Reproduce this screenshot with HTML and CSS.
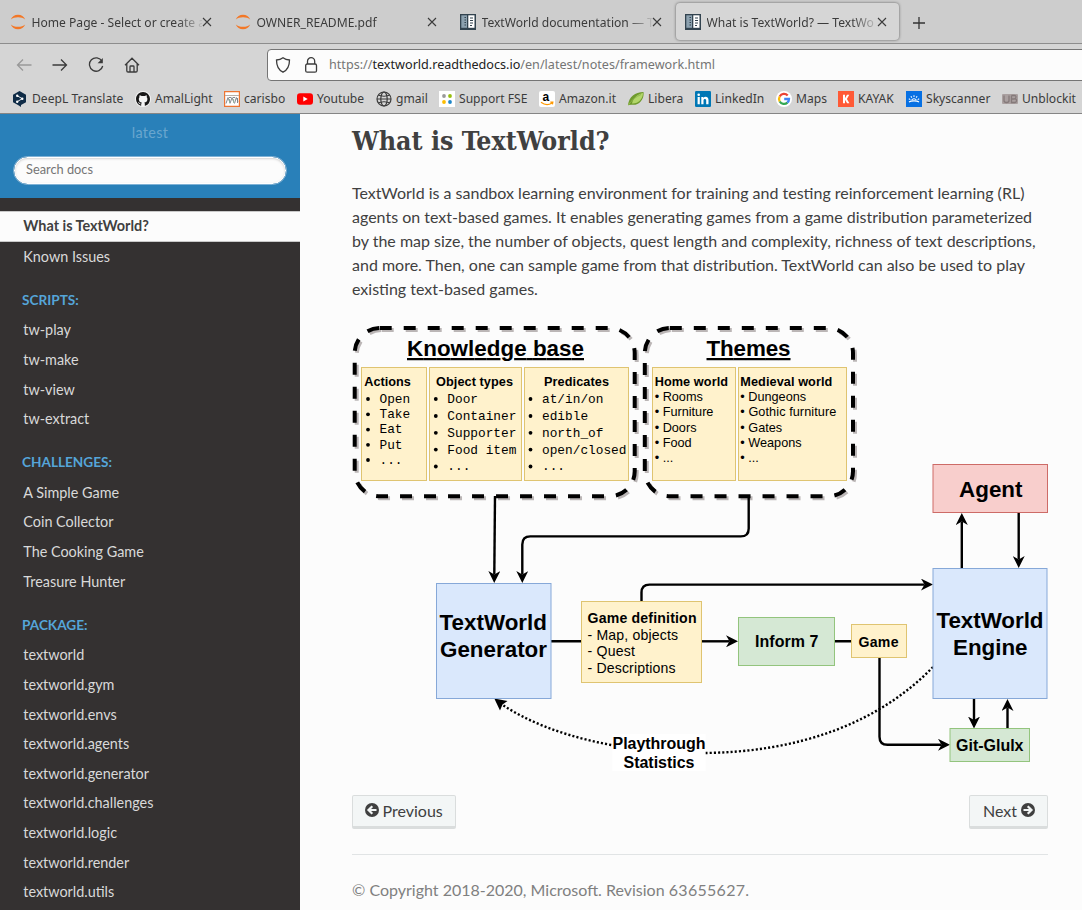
FILE: index.html
```html
<!DOCTYPE html>
<html lang="en">
<head>
<meta charset="utf-8">
<title>What is TextWorld? — TextWorld documentation</title>
<link rel="stylesheet" href="styles.css">
</head>
<body>
<svg class="defs" width="0" height="0">
  <defs>
    <symbol id="close" viewBox="0 0 10 10"><path d="M1 1l8 8M9 1L1 9" fill="none" stroke="#3b3b3b" stroke-width="1.1"/></symbol>
    <symbol id="jupyter" viewBox="0 0 16 16"><path d="M.8 5.6C2 2.6 4.700 .8 8 .8s6 1.800 7.200 4.800C13.500 4 11 3.200 8 3.200S2.500 4 .8 5.600zM.8 10.400C2 13.400 4.700 15.200 8 15.200s6-1.800 7.200-4.800C13.500 12 11 12.800 8 12.800S2.500 12 .8 10.400z" fill="#f37726"/></symbol>
    <symbol id="rtd" viewBox="0 0 16 16"><path d="M0 0h16v16H0z" fill="#32434f"/><path d="M1.300 1.300h5.700v12.500H1.300z" fill="#8ca1af"/><path d="M8.300 1.300h6.200v12.500H8.300z" fill="#fff"/><path d="M10 4h3M10 6.500h3M10 9h3M10 11.500h2M4.500 3.500h1.500M4.500 6h1.500M4.500 8.500h1.500M4.500 11h1.500" stroke="#32434f" stroke-width="1.200"/></symbol>
  </defs>
</svg>
<header class="browser">
  <div class="tabs">
    <div class="tab"><svg class="fav"><use href="#jupyter"/></svg><span class="tab-title">Home Page - Select or create a</span><svg class="x"><use href="#close"/></svg></div>
    <div class="tab"><svg class="fav"><use href="#jupyter"/></svg><span class="tab-title">OWNER_README.pdf</span><svg class="x"><use href="#close"/></svg></div>
    <div class="tab"><svg class="fav"><use href="#rtd"/></svg><span class="tab-title">TextWorld documentation — T</span><svg class="x"><use href="#close"/></svg></div>
    <div class="tab active"><svg class="fav"><use href="#rtd"/></svg><span class="tab-title">What is TextWorld? — TextWo</span><svg class="x"><use href="#close"/></svg></div>
    <svg class="plus" viewBox="0 0 12 12"><path d="M6 0v12M0 6h12" stroke="#333" stroke-width="1.300"/></svg>
  </div>
  <div class="toolbar">
    <div class="nav-buttons">
      <svg viewBox="0 0 16 16" class="dim"><path d="M15.500 8H1.500M7 2.500L1.500 8 7 13.500"/></svg>
      <svg viewBox="0 0 16 16"><path d="M.5 8h14M9 2.500L14.500 8 9 13.500"/></svg>
      <svg viewBox="0 0 16 16"><path d="M14 4.200A6.700 6.700 0 1 0 14.700 9"/><path d="M14.800 1v5.200H9.600z" fill="#3b3b3b" stroke="none"/></svg>
      <svg viewBox="0 0 16 16"><path d="M1 8.300L8 1.200l7 7.100M2.800 7v6.700q0 1.300 1.300 1.300h7.800q1.300 0 1.300-1.300V7M6 15V9.800q0-.8.8-.8h2.400q.8 0 .8.800V15"/></svg>
    </div>
    <div class="urlbar">
      <svg viewBox="0 0 16 16"><path d="M8 .8c2 1.500 4.300 2.100 6.500 2.200 0 5.200-1.200 9.700-6.500 12.200C2.700 12.700 1.500 8.200 1.500 3 3.700 2.900 6 2.300 8 .8z"/></svg>
      <svg viewBox="0 0 16 16"><rect x="2.700" y="7" width="10.800" height="8.200" rx="1.500"/><path d="M4.500 7V4.300a3.600 3.600 0 0 1 7.200 0V7"/></svg>
      <span class="url">https://<b>textworld.readthedocs.io</b>/en/latest/notes/framework.html</span>
    </div>
  </div>
  <nav class="bookmarks">
    <a><svg viewBox="0 0 16 16"><path d="M7.500 0l6.500 3.700v7.500L9 14v2l-3-2-5-2.800V3.700z" fill="#0f2b46"/><path d="M5.200 4.700l5 3-5 3" stroke="#fff" fill="none" stroke-width=".9"/><circle cx="5.200" cy="4.700" r="1.200" fill="#fff"/><circle cx="10.300" cy="7.700" r="1.200" fill="#fff"/><circle cx="5.200" cy="10.700" r="1.200" fill="#fff"/></svg><span>DeepL Translate</span></a>
    <a><svg viewBox="0 0 16 16"><circle cx="8" cy="8" r="8" fill="#f4f4f4"/><path d="M8 1C4.100 1 1 4.200 1 8.100c0 3.200 2 5.800 4.800 6.700.3 0 .4-.2.4-.4v-1.300c-2 .4-2.400-.9-2.400-.9-.4-.9-.9-1.200-.9-1.200 1-.3 1.600.9 1.600.9.800 1.200 1.800.9 2 .7l.4-.9c-1.700-.3-3.100-1-3.100-3.600 0-.8.300-1.400.7-1.900-.1-.3-.3-1 .1-1.900.8 0 1.400.4 2 .8a7 7 0 0 1 3 0c1-.6 2-.8 2-.8.4.9.2 1.600.1 1.900.5.500.7 1.100.7 1.900 0 2.700-1.500 3.300-3.100 3.500.3.300.5.700.5 1.300v1.500c0 .2.100.4.500.4A7 7 0 0 0 15 8.100C15 4.200 11.900 1 8 1z" fill="#181717"/></svg><span>AmalLight</span></a>
    <a><svg viewBox="0 0 16 16"><path d="M.6.6h14.800v14.800H.6z" fill="#fff" stroke="#ed7532" stroke-width="1.200"/><path d="M1 4.500h14" stroke="#b9b0a8"/><path d="M2 12.500L4 6.500l1.500 4M5 6.500h2M6 12.500L8 6.500l1.500 4M9 6.500h2M10.500 12.500l1.800-6 1.700 4M13.500 7v5" fill="none" stroke="#767c83" stroke-width=".9"/><path d="M5.500 8v4M9.600 8v4" stroke="#7fa58b" stroke-width=".8"/></svg><span>carisbo</span></a>
    <a><svg viewBox="0 0 16 16"><rect y="2.300" width="16" height="11.400" rx="3" fill="red"/><path d="M6.300 5.500v5l4.400-2.500z" fill="#fff"/></svg><span>Youtube</span></a>
    <a><svg viewBox="0 0 16 16"><g fill="none" stroke="#3b3b3b" stroke-width="1.200"><circle cx="8" cy="8" r="7"/><ellipse cx="8" cy="8" rx="3.200" ry="7"/><path d="M1 8h14M2.500 4.300q5.500 2 11 0M2.500 11.700q5.500-2 11 0" stroke-width="1"/></g></svg><span>gmail</span></a>
    <a><svg viewBox="0 0 16 16"><path d="M0 0h16v16H0z" fill="#fff"/><circle cx="5" cy="5" r="1.900" fill="#999"/><circle cx="11" cy="5" r="1.900" fill="#97bf0d"/><circle cx="5" cy="11" r="1.900" fill="#fdbd00"/><circle cx="11" cy="11" r="1.900" fill="#1e86c8"/></svg><span>Support FSE</span></a>
    <a><svg viewBox="0 0 16 16"><rect width="16" height="16" rx="2" fill="#fff"/><text x="3.600" y="9.800" class="amazon">a</text><path d="M2 11.300c3.500 2.700 8 2.700 11 .7M11.300 11.200l2.500-.1-.4 2.200" fill="none" stroke="#f90" stroke-width="1.300"/></svg><span>Amazon.it</span></a>
    <a><svg viewBox="0 0 16 16"><path d="M0 14C1 6 7 1 15.500 1 16.500 8 11 15 3.500 13.700z" fill="#6f9a2d"/><path d="M4 12.500C5 7 10 3 15 2c0 6-5 11-11 10.500z" fill="#b2d66a"/><path d="M0 14.500C3 9.500 8 5.500 13 3.500" fill="none" stroke="#8fb84c"/></svg><span>Libera</span></a>
    <a><svg viewBox="0 0 16 16"><rect width="16" height="16" rx="1.200" fill="#0077b5"/><path d="M2.600 6h2.200v7.300H2.600zM6.300 6h2.100v1c1.300-2 5.100-1.500 5.100 2v4.300h-2.300V9.500c0-2-2.700-2-2.700 0v3.800H6.300z" fill="#fff"/><circle cx="3.700" cy="3.700" r="1.300" fill="#fff"/></svg><span>LinkedIn</span></a>
    <a><svg viewBox="0 0 16 16"><circle cx="8" cy="8" r="8" fill="#fff"/><g fill="none" stroke-width="2.300"><path d="M3.700 5.500A5 5 0 0 1 11.700 4.500" stroke="#ea4335"/><path d="M3.700 5.500a5 5 0 0 0 0 5" stroke="#fbbc05"/><path d="M3.700 10.500a5 5 0 0 0 7.700 1.100" stroke="#34a853"/><path d="M8.200 8H13q0 2.400-1.700 3.700" stroke="#4285f4"/></g></svg><span>Maps</span></a>
    <a><svg viewBox="0 0 16 16"><path d="M0 0h16v16H0z" fill="#ff5a36"/><path d="M5 3.700h2v3.500l2-3.500h2.300L8.900 8l2.500 4.300H9.100L7 8.800v3.500H5z" fill="#fff"/></svg><span>KAYAK</span></a>
    <a><svg viewBox="0 0 16 16"><path d="M0 0h16v16H0z" fill="#0770e3"/><path d="M3 11c2-1.500 8-1.500 10 0M5.700 9c1-1.700 3.600-1.700 4.600 0M8 4.300v1.700M4.900 5.200l.9 1.400M11.100 5.200l-.9 1.400M2.800 7.700l1.500.9M13.200 7.700l-1.500.9" fill="none" stroke="#fff" stroke-width="1.050"/></svg><span>Skyscanner</span></a>
    <a><svg viewBox="0 0 16 16"><rect y="3" width="16" height="10" rx="1" fill="#aaa0a0"/><path d="M2 4.500v5q0 2 2.500 2t2.500-2v-5M9.500 4.500v7h3.500q1.500 0 1.500-2T12 8H10m2 0q2-.3 2-2t-2-1.500h-2.500" stroke="#857a7a" fill="none" stroke-width="1.300"/></svg><span>Unblockit</span></a>
  </nav>
</header>
<div class="page">
  <aside class="sidebar">
    <div class="search-area"><div class="version">latest</div><div class="search">Search docs</div></div>
    <nav class="menu">
      <a class="current">What is TextWorld?</a><a>Known Issues</a>
      <p>Scripts:</p><a>tw-play</a><a>tw-make</a><a>tw-view</a><a>tw-extract</a>
      <p>Challenges:</p><a>A Simple Game</a><a>Coin Collector</a><a>The Cooking Game</a><a>Treasure Hunter</a>
      <p>Package:</p><a>textworld</a><a>textworld.gym</a><a>textworld.envs</a><a>textworld.agents</a><a>textworld.generator</a><a>textworld.challenges</a><a>textworld.logic</a><a>textworld.render</a><a>textworld.utils</a>
    </nav>
  </aside>
  <main class="content">
    <h1>What is TextWorld?</h1>
    <p class="intro">TextWorld is a sandbox learning environment for training and testing reinforcement learning (RL)<br>agents on text-based games. It enables generating games from a game distribution parameterized<br>by the map size, the number of objects, quest length and complexity, richness of text descriptions,<br>and more. Then, one can sample game from that distribution. TextWorld can also be used to play<br>existing text-based games.</p>
    <svg class="diagram" viewBox="352 325 698 450">
      <defs>
        <marker id="arrow" viewBox="0 0 12 12" refX="3.500" refY="6" markerWidth="12" markerHeight="12" markerUnits="userSpaceOnUse" orient="auto"><path d="M0 0L12 6 0 12 3.500 6z"/></marker>
      </defs>
      <g class="dashed">
        <rect class="shade" x="356.700" y="330" width="280" height="168.300" rx="25"/>
        <rect class="shade" x="646.800" y="330" width="208.200" height="168.300" rx="25"/>
        <rect x="354.700" y="328" width="280" height="168.300" rx="25"/>
        <rect x="644.800" y="328" width="208.200" height="168.300" rx="25"/>
      </g>
      <g class="wire">
        <path d="M495 496L494.300 574.500"/>
        <path d="M748.700 496V528.400Q748.700 536.400 740.700 536.400H530.300Q522.300 536.400 522.300 544.400V574.500"/>
        <path d="M641.500 601V592.600Q641.500 584.600 649.500 584.600H924.500"/>
        <path class="plain" d="M551 641.300H582M834 641.300H852"/>
        <path d="M701 641.300H729.500"/>
        <path d="M879.500 657V736.800Q879.500 744.800 887.500 744.800H941.500"/>
        <path d="M961.800 568V521.500"/><path d="M1018.700 512V559.500"/>
        <path d="M974 698V720"/><path d="M1007.500 729V707.500"/>
        <path class="dotted" d="M933 667C880 722 800 753 700 753C630 753 552 738 502 704.500"/>
      </g>
      <path d="M494.300 698.500L507.500 701 502.500 704.500 500 710.500z"/>
      <g class="yellow">
        <rect x="361.500" y="367.500" width="65" height="113"/><rect x="429.500" y="367.500" width="92" height="113"/><rect x="524.500" y="367.500" width="104" height="113"/>
        <rect x="652.500" y="367.500" width="83" height="113"/><rect x="738.500" y="367.500" width="108" height="113"/>
        <rect x="581.500" y="601.500" width="120" height="81"/><rect x="851.500" y="624.500" width="55" height="33"/>
      </g>
      <g class="blue"><rect x="436.500" y="583.500" width="114.500" height="115"/><rect x="933" y="568.500" width="114" height="130"/></g>
      <g class="green"><rect x="738.500" y="617.500" width="96" height="48"/><rect x="950" y="728.500" width="79.500" height="33"/></g>
      <rect class="red" x="933" y="464.500" width="114.500" height="48"/>
      <rect x="612.500" y="734" width="93" height="37" fill="#fff"/>
      <g class="title">
        <text x="407" y="356" textLength="177" class="u">Knowledge base</text><text x="706.500" y="356" textLength="84" class="u">Themes</text>
        <text x="439.500" y="630.400" textLength="107.500">TextWorld</text><text x="440" y="657" textLength="107">Generator</text>
        <text x="936.500" y="628" textLength="107">TextWorld</text><text x="953" y="655" textLength="74.500">Engine</text>
        <text x="959" y="496.900" textLength="63.500">Agent</text>
      </g>
      <g class="mid">
        <text x="755" y="647.400" textLength="63.500">Inform 7</text>
        <text x="956" y="751" textLength="67.500">Git-Glulx</text>
        <text x="612.500" y="749.400" textLength="93">Playthrough</text><text x="623.500" y="768.400" textLength="71">Statistics</text>
      </g>
      <g class="small-title">
        <text x="364.200" y="386" textLength="46.700">Actions</text><text x="436" y="386" textLength="77">Object types</text><text x="544" y="386" textLength="65">Predicates</text>
        <text x="654.700" y="386" textLength="73.300">Home world</text><text x="740.300" y="386" textLength="92">Medieval world</text>
      </g>
      <g class="def">
        <text class="strong" x="587.500" y="623" textLength="109">Game definition</text>
        <text x="587.500" y="640" textLength="90.500">- Map, objects</text><text x="587.500" y="656.400" textLength="47.500">- Quest</text><text x="587.500" y="673.300" textLength="88">- Descriptions</text>
        <text class="strong" x="858.500" y="647.400" textLength="40">Game</text>
      </g>
      <g class="mono">
        <text x="379.500" y="403.300">Open</text><text x="379.500" y="418.400">Take</text><text x="379.500" y="433.400">Eat</text><text x="379.500" y="449">Put</text><text x="379.500" y="464.400">...</text>
        <text x="447.300" y="403.300">Door</text><text x="447.300" y="420.300">Container</text><text x="447.300" y="437.300">Supporter</text><text x="447.300" y="454">Food item</text><text x="447.300" y="470.400">...</text>
        <text x="542" y="403.300">at/in/on</text><text x="542" y="420.300">edible</text><text x="542" y="437.300">north_of</text><text x="542" y="454">open/closed</text><text x="542" y="470.400">...</text>
      </g>
      <g>
        <circle cx="368" cy="399" r="1.900"/><circle cx="368" cy="414.300" r="1.900"/><circle cx="368" cy="429.600" r="1.900"/><circle cx="368" cy="444.800" r="1.900"/><circle cx="368" cy="460" r="1.900"/>
        <circle cx="435.800" cy="399" r="1.900"/><circle cx="435.800" cy="416" r="1.900"/><circle cx="435.800" cy="432.800" r="1.900"/><circle cx="435.800" cy="449.600" r="1.900"/><circle cx="435.800" cy="466.500" r="1.900"/>
        <circle cx="530.500" cy="399" r="1.900"/><circle cx="530.500" cy="416" r="1.900"/><circle cx="530.500" cy="432.800" r="1.900"/><circle cx="530.500" cy="449.600" r="1.900"/><circle cx="530.500" cy="466.500" r="1.900"/>
      </g>
      <g class="list">
        <text x="654.700" y="401.400">• Rooms</text><text x="654.700" y="416.400">• Furniture</text><text x="654.700" y="431.900">• Doors</text><text x="654.700" y="447.200">• Food</text><text x="654.700" y="462.400">• ...</text>
        <text x="740.300" y="401.400">• Dungeons</text><text x="740.300" y="416.400" textLength="96">• Gothic furniture</text><text x="740.300" y="431.900">• Gates</text><text x="740.300" y="447.200">• Weapons</text><text x="740.300" y="462.400">• ...</text>
      </g>
    </svg>
    <div class="pager">
      <a class="btn"><svg viewBox="0 0 14 14"><circle cx="7" cy="7" r="7"/><path d="M11.500 7H3.800M7.300 3.300L3.500 7l3.800 3.700"/></svg>Previous</a>
      <a class="btn">Next<svg viewBox="0 0 14 14"><circle cx="7" cy="7" r="7"/><path d="M2.500 7h7.700M6.700 3.300L10.500 7l-3.800 3.700"/></svg></a>
    </div>
    <footer>© Copyright 2018-2020, Microsoft. Revision <span class="rev">63655627</span>.</footer>
  </main>
</div>
</body>
</html>
```

FILE: styles.css
```css
* { box-sizing: border-box; }
body { margin: 0; width: 1082px; height: 910px; overflow: hidden; display: flex; flex-direction: column; background: #fcfcfc; color: #404040; font-family: Lato, sans-serif; }
.defs { position: absolute; }
.browser { flex: none; height: 114px; background: #d5d5d5; border-bottom: 1px solid #858585; font: 12.1px "Noto Sans", sans-serif; color: #3b3b3b; }
.tabs { height: 44px; background: #cdcdcd; border-bottom: 1px solid #8d8d8d; display: flex; align-items: flex-start; padding-top: 3px; gap: 2px; padding-left: 1px; }
.tab { width: 223px; height: 37px; display: flex; align-items: center; padding-left: 9px; border-radius: 4px; }
.tab.active { background: #d6d6d6; box-shadow: 0 0 3px rgba(0,0,0,.55); }
.fav { width: 16px; height: 16px; flex: none; }
.tab-title { width: 170px; margin: 1px 0 0 5.5px; white-space: nowrap; -webkit-mask-image: linear-gradient(to right, #000 145px, transparent 173px); mask-image: linear-gradient(to right, #000 145px, transparent 173px); }
.x { width: 10px; height: 10px; margin-left: .5px; flex: none; }
.plus { width: 12px; height: 12px; margin: 14px 0 0 12px; }
.toolbar { height: 40px; display: flex; align-items: center; }
.nav-buttons { display: flex; gap: 20px; padding: 1px 0 0 16px; width: 267px; flex: none; }
.toolbar svg { width: 16px; height: 16px; fill: none; stroke: #3b3b3b; stroke-width: 1.3; flex: none; }
.toolbar svg.dim { stroke: #999; }
.urlbar { height: 32px; width: 830px; margin-top: 1px; border: 1px solid #757575; border-radius: 4px; background: #fcfcfc; display: flex; align-items: center; gap: 12px; padding-left: 7px; flex: none; }
.url { color: #757575; font-size: 12.62px; margin: -1px 0 0 -2px; }
.url b { color: #222; font-weight: 400; }
.bookmarks { display: grid; grid-template-columns: 123px 89px 73px 79px 63px 100px 89px 67px 81px 62px 68px 96px 80px; padding: 7px 0 0 12px; height: 29px; }
.bookmarks a { display: flex; align-items: center; gap: 4px; height: 16px; white-space: nowrap; }
.bookmarks span { margin-top: -2px; }
.bookmarks svg { width: 16px; height: 16px; flex: none; }
.amazon { font: bold 12px "Liberation Sans", sans-serif; }
.page { flex: 1; display: flex; min-height: 0; }
.sidebar { width: 300px; background: #343131; overflow: hidden; flex: none; }
.search-area { background: #2980b9; height: 84px; padding: 9px 13px 0; }
.version { text-align: center; line-height: 20px; font-size: 14.4px; color: #69a6ce; letter-spacing: .3px; height: 33px; }
.search { height: 29px; border: 1px solid #2472a4; border-radius: 50px; background: #fcfcfc; box-shadow: inset 0 0 0 1px #fff, inset 0 1px 3px #aaa; color: #757575; font-size: 12.8px; line-height: 25px; padding-left: 12px; outline: 1px solid #7fb2d6; outline-offset: -1px; }
.menu { padding-top: 12.6px; }
.menu a { display: block; font-size: 14.4px; line-height: 18px; padding: 5.825px 23.3px; color: #d9d9d9; }
.menu a.current { background: #fcfcfc; color: #404040; font-weight: 700; border-top: 1px solid #c9c9c9; border-bottom: 1px solid #c9c9c9; margin-bottom: -.3px; }
.menu p { margin: 12px 0 0; padding: 0 22px; height: 32px; line-height: 32px; font-size: 13.6px; font-weight: 700; text-transform: uppercase; color: #55a5d9; }
.content { flex: 1; padding: 8px 34px 0 52px; display: flex; flex-direction: column; }
h1 { margin: 0; font: 700 26.5px/37px "Roboto Slab", "DejaVu Serif Condensed", "DejaVu Serif", serif; font-stretch: condensed; white-space: nowrap; }
.intro { margin: 22px 0 0; font-size: 16px; line-height: 24px; white-space: nowrap; height: 144px; }
.diagram { width: 698px; height: 450px; flex: none; font-family: "Liberation Sans", sans-serif; }
.dashed rect { fill: none; stroke: #000; stroke-width: 4; stroke-dasharray: 12; }
.dashed .shade { stroke: #bbb6b6; }
.wire path { fill: none; stroke: #000; stroke-width: 2.4; marker-end: url(#arrow); }
.wire .plain { marker-end: none; }
.wire .dotted { marker-end: none; stroke-dasharray: 2.1; }
.yellow { fill: #fff2cc; stroke: #dfc471; }
.blue { fill: #dae8fc; stroke: #86a8d8; }
.green { fill: #d5e8d4; stroke: #93c47d; }
.red { fill: #f8cecc; stroke: #cd6b67; }
.title { font-size: 22.4px; font-weight: 700; }
.title .u { text-decoration: underline; text-decoration-thickness: 2px; }
.mid { font-size: 16px; font-weight: 700; }
.small-title { font-size: 12.7px; font-weight: 700; }
.def { font-size: 14.1px; }
.strong { font-weight: 700; }
.mono { font: 12.8px "Liberation Mono", monospace; }
.list { font-size: 12.7px; }
.pager { display: flex; justify-content: space-between; width: 696px; margin-top: 20px; }
.btn { height: 34px; display: flex; align-items: center; gap: 4px; padding: 0 12px 2px 11.5px; font-size: 16px; background: #f3f6f6; border: 1px solid #dadddd; border-bottom: 3px solid #dadddd; border-radius: 2px; }
.btn + .btn { padding-left: 12.5px; }
.btn svg { width: 14px; height: 14px; fill: #404040; }
.btn path { fill: none; stroke: #f3f6f6; stroke-width: 2.2; }
footer { width: 696px; margin-top: 25px; border-top: 1px solid #e1e4e5; padding-top: 23px; line-height: 24px; color: #808080; font-size: 16px; }
.rev { letter-spacing: .3px; }
```
